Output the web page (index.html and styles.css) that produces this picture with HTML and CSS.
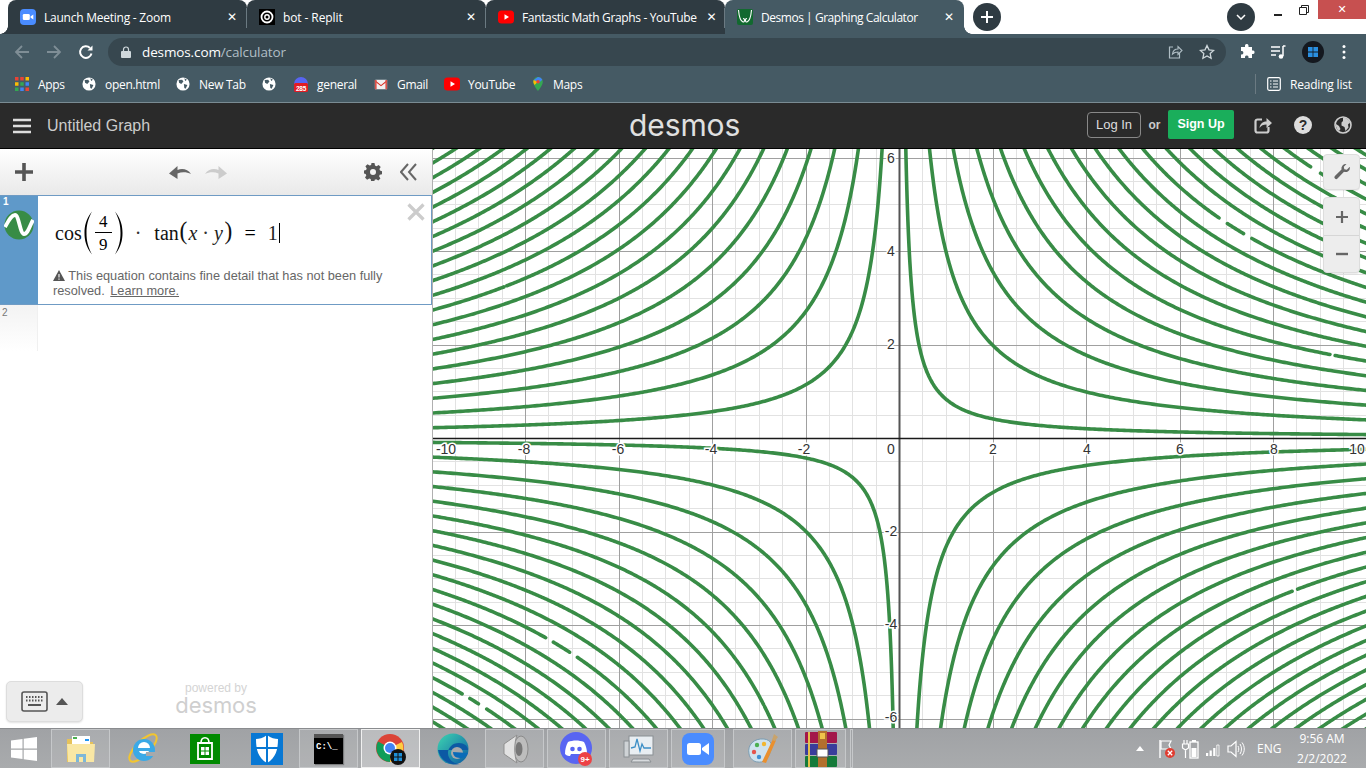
FILE: index.html
```html
<!DOCTYPE html>
<html lang="en">
<head>
<meta charset="utf-8">
<title>Desmos | Graphing Calculator</title>
<link rel="stylesheet" href="styles.css">
</head>
<body>
<svg class="defs" width="0" height="0" aria-hidden="true">
  <symbol id="globe" viewBox="0 0 16 16"><circle cx="8" cy="8" r="7.500" fill="#fff"/><path d="M3 3.500 7 3l1.500 2L6 8 3.500 6.500zM9 8l4 1-2 4.500-1.500-1zM9.500 1.500l3 1.500-2 1.500z" fill="#455a64"/></symbol>
  <symbol id="yt" viewBox="0 0 16 16"><rect y="1.500" width="16" height="13" rx="3.500" fill="#f00"/><path d="M6.500 5.200v5.600L11 8z" fill="#fff"/></symbol>
  <symbol id="cam" viewBox="0 0 16 16"><rect width="16" height="16" rx="4" fill="#4a8cff"/><rect x="2.800" y="5" width="7" height="6" rx="1.300" fill="#fff"/><path d="M10.500 7.500 13.300 5.400v5.200L10.500 8.500z" fill="#fff"/></symbol>
</svg>

<header class="chrome">
  <div class="tabstrip">
    <div class="tab tab-first">
      <svg class="fav" viewBox="0 0 16 16"><use href="#cam"/></svg>
      <span class="tab-title t-zoom">Launch Meeting - Zoom</span><span class="tab-x">✕</span>
    </div>
    <div class="tab">
      <svg class="fav" viewBox="0 0 16 16"><rect width="16" height="16" fill="#000"/><circle cx="8" cy="8" r="5.500" fill="none" stroke="#fff" stroke-width="1.800"/><circle cx="8" cy="8" r="2.200" fill="none" stroke="#fff" stroke-width="1.400"/></svg>
      <span class="tab-title">bot - Replit</span><span class="tab-x">✕</span>
    </div>
    <div class="tab">
      <svg class="fav" viewBox="0 0 16 16"><use href="#yt"/></svg>
      <span class="tab-title t-yt">Fantastic Math Graphs - YouTube</span><span class="tab-x">✕</span>
    </div>
    <div class="tab tab-active">
      <svg class="fav" viewBox="0 0 16 16"><rect width="16" height="16" rx="2" fill="#12692f"/><path d="M1.500 1c.5 6 2 11 4.500 12C8 13.500 8 9 6 9.500M14.500 1c-.5 6-2 11-4.500 12C8 13.500 8 9 10 9.500" fill="none" stroke="#fff" stroke-width="1.100"/></svg>
      <span class="tab-title t-des">Desmos | Graphing Calculator</span><span class="tab-x">✕</span>
    </div>
    <div class="newtab"><svg viewBox="0 0 14 14" width="14" height="14"><path d="M7 1v12M1 7h12" stroke="#fff" stroke-width="2"/></svg></div>
    <div class="tabsearch"><svg viewBox="0 0 10 6" width="10" height="6"><path d="M1 1l4 4 4-4" fill="none" stroke="#fff" stroke-width="1.500"/></svg></div>
    <div class="winctl">
      <span class="win-min"></span>
      <svg class="win-max" viewBox="0 0 10 10" width="10" height="10"><path d="M.5 2.500h7v7h-7zM2.500 2.500v-2h7v7h-2" fill="none" stroke="#222"/></svg>
      <span class="win-close">✕</span>
    </div>
  </div>

  <div class="toolbar">
    <svg class="nav" viewBox="0 0 16 16"><path d="M15 8H2M8 2 2 8l6 6" fill="none" stroke="#7f8e96" stroke-width="1.800"/></svg>
    <svg class="nav" viewBox="0 0 16 16"><path d="M1 8h13M8 2l6 6-6 6" fill="none" stroke="#7f8e96" stroke-width="1.800"/></svg>
    <svg class="nav" viewBox="0 0 16 16"><path d="M13.500 9.500A5.800 5.800 0 1 1 12 4" fill="none" stroke="#fff" stroke-width="2"/><path d="M14.500 1.500v5h-5z" fill="#fff"/></svg>
    <div class="omnibox">
      <svg class="lock" viewBox="0 0 10 12" width="10" height="12"><path d="M2.500 5V3.500a2.500 2.500 0 0 1 5 0V5" fill="none" stroke="#cfd8dc" stroke-width="1.200"/><rect y="5" width="10" height="7" rx="1" fill="#cfd8dc"/></svg>
      <span class="url">desmos.com<span class="url-path">/calculator</span></span>
      <svg class="omni-ic" viewBox="0 0 16 16"><path d="M6 3H2.500v11h10V9" fill="none" stroke="#b0bec5" stroke-width="1.200"/><path d="M5.500 10c.5-3.500 3-5 5.500-5V2.500L15 6.500l-4 4V8c-2 0-4 .5-5.500 2z" fill="none" stroke="#b0bec5" stroke-width="1.100"/></svg>
      <svg class="omni-ic omni-star" viewBox="0 0 16 16"><path d="M8 1.500l2 4.300 4.700.6-3.500 3.200.9 4.700L8 12l-4.100 2.300.9-4.700L1.300 6.400 6 5.800z" fill="none" stroke="#cfd8dc" stroke-width="1.300"/></svg>
    </div>
    <svg class="ext" viewBox="0 0 16 16"><path d="M6 1.500a1.800 1.800 0 0 1 3.500 0V3H13v3.500h1.200a1.800 1.800 0 0 1 0 3.500H13v4H9.500v-1.200a1.800 1.800 0 0 0-3.500 0V14H2v-3.500h1a1.800 1.800 0 0 0 0-3.500H2V3h4z" fill="#fff"/></svg>
    <svg class="ext" viewBox="0 0 16 16"><path d="M1 3h9M1 7h9M1 11h5" stroke="#fff" stroke-width="1.500"/><path d="M13 2v10" stroke="#fff" stroke-width="1.500"/><circle cx="11" cy="12.500" r="2.300" fill="#fff"/><path d="M13 2h2.500" stroke="#fff" stroke-width="1.500"/></svg>
    <span class="avatar"><svg viewBox="0 0 10 10" width="10" height="10"><path d="M0 0h4.600v4.600H0zM5.400 0H10v4.600H5.400zM0 5.400h4.600V10H0zM5.400 5.400H10V10H5.400z" fill="#2a8fe0"/></svg></span>
    <svg class="dots" viewBox="0 0 4 16" width="4" height="16"><circle cx="2" cy="2.500" r="1.500" fill="#fff"/><circle cx="2" cy="8" r="1.500" fill="#fff"/><circle cx="2" cy="13.500" r="1.500" fill="#fff"/></svg>
  </div>

  <nav class="bookmarks">
    <a class="bm bm-apps"><svg class="bm-ic" viewBox="0 0 12 12"><g><rect width="3" height="3" fill="#ea4335"/><rect x="4.500" width="3" height="3" fill="#ea4335"/><rect x="9" width="3" height="3" fill="#fbbc05"/><rect y="4.500" width="3" height="3" fill="#fbbc05"/><rect x="4.500" y="4.500" width="3" height="3" fill="#34a853"/><rect x="9" y="4.500" width="3" height="3" fill="#4285f4"/><rect y="9" width="3" height="3" fill="#34a853"/><rect x="4.500" y="9" width="3" height="3" fill="#4285f4"/><rect x="9" y="9" width="3" height="3" fill="#ea4335"/></g></svg>Apps</a>
    <a class="bm bm-open"><svg class="bm-ic" viewBox="0 0 16 16"><use href="#globe"/></svg>open.html</a>
    <a class="bm bm-new"><svg class="bm-ic" viewBox="0 0 16 16"><use href="#globe"/></svg>New Tab</a>
    <a class="bm bm-glob"><svg class="bm-ic" viewBox="0 0 16 16"><use href="#globe"/></svg></a>
    <a class="bm bm-gen"><svg class="bm-ic" viewBox="0 0 16 16"><path d="M1 8a7 7 0 0 1 14 0z" fill="#5865f2"/><rect x="1" y="7" width="14" height="9" rx="1.500" fill="#e21b23"/><text x="8" y="14.500" class="bm-badge">285</text></svg>general</a>
    <a class="bm bm-gmail"><svg class="bm-ic" viewBox="0 0 16 16"><rect x="1" y="3" width="14" height="11" rx="1" fill="#f1f1f1"/><path d="M1 3.500 8 9l7-5.500V5L8 10.500 1 5z" fill="#d93025"/><path d="M1 3.500h2v10.500H1zM13 3.500h2v10.500h-2z" fill="#d9534b"/></svg>Gmail</a>
    <a class="bm bm-yt"><svg class="bm-ic" viewBox="0 0 16 16"><use href="#yt"/></svg>YouTube</a>
    <a class="bm bm-maps"><svg class="bm-ic" viewBox="0 0 16 16"><path d="M8 0a5.500 5.500 0 0 0-5.500 5.500C2.500 9.500 8 16 8 16s5.500-6.500 5.500-10.500A5.500 5.500 0 0 0 8 0z" fill="#34a853"/><path d="M3 3.500 8 0a5.500 5.500 0 0 1 5 3L8 7.500z" fill="#4285f4"/><path d="M3 3.500C2.200 6 3 7.500 4 9l4-3.500z" fill="#fbbc05"/><circle cx="8" cy="5.500" r="2" fill="#ea4335"/></svg>Maps</a>
    <span class="bm-spacer"></span>
    <span class="bm-divider"></span>
    <a class="bm bm-read"><svg class="bm-ic" viewBox="0 0 14 14"><rect x=".7" y=".7" width="12.600" height="12.600" rx="1.500" fill="none" stroke="#fff" stroke-width="1.200"/><path d="M3 4h1.500M6 4h5M3 7h1.500M6 7h5M3 10h1.500M6 10h5" stroke="#fff" stroke-width="1.200"/></svg>Reading list</a>
  </nav>
</header>

<section class="app-head">
  <div class="head-left">
    <svg class="burger" viewBox="0 0 18 16" width="18" height="16"><path d="M0 2h18M0 8h18M0 14h18" stroke="#ddd" stroke-width="2.600"/></svg>
    <span class="graph-title">Untitled Graph</span>
  </div>
  <div class="logo">desmos</div>
  <div class="head-right">
    <span class="btn-login">Log In</span>
    <span class="or">or</span>
    <span class="btn-signup">Sign Up</span>
    <svg class="head-ic head-share" viewBox="0 0 18 18"><path d="M8 3.500H3.500a2 2 0 0 0-2 2v9a2 2 0 0 0 2 2h9a2 2 0 0 0 2-2V11" fill="none" stroke="#ccc" stroke-width="2.200"/><path d="M5.500 12c.5-4 3-6.500 7-6.500V2L18 7l-5.500 5V8.500c-3 0-5.500 1-7 3.500z" fill="#ccc"/></svg>
    <svg class="head-ic" viewBox="0 0 18 18"><circle cx="9" cy="9" r="9" fill="#ddd"/><text x="9" y="14" class="help-q">?</text></svg>
    <svg class="head-ic" viewBox="0 0 18 18"><circle cx="9" cy="9" r="8" fill="none" stroke="#ccc" stroke-width="1.600"/><path d="M9 1.500c3 0 6 2 7 5l-2 2 .5 3-3 3.500-1-4-3-1.500v-3L9 5zM2 8l3 2 1.500 3L5 15c-2-1.500-3.500-4-3-7z" fill="#ccc"/></svg>
  </div>
</section>

<main class="workspace">
  <aside class="sidebar">
    <div class="side-tools">
      <svg class="st-plus" viewBox="0 0 18 18" width="18" height="18"><path d="M9 0v18M0 9h18" stroke="#555" stroke-width="3.600"/></svg>
      <div class="st-hist">
        <svg viewBox="0 0 22 14" width="22" height="14"><path d="M0 8.500 8.500 1v4C13 3 19 4 22 9c-4-2-9-2.500-13.500-.5V14z" fill="#666"/></svg>
        <svg viewBox="0 0 22 14" width="22" height="14"><path d="M22 8.500 13.500 1v4C9 3 3 4 0 9c4-2 9-2.500 13.500-.5V14z" fill="#ccc"/></svg>
      </div>
      <svg class="st-gear" viewBox="0 0 18 18" width="18" height="18"><path d="M7.500 0h3l.5 2.500 1.500.7 2.200-1.300 2 2.100-1.300 2.100.6 1.500 2 .6v3l-2.300.5-.6 1.500 1.300 2.200-2.100 2.100-2.100-1.300-1.500.6-.5 2.200h-3L6.700 16l-1.500-.6-2.100 1.300L1 14.600l1.300-2.200-.6-1.400L0 10.500v-3l2.100-.5.6-1.500L1.400 3.300 3.500 1.200l2.100 1.300 1.500-.6zM9 6a3 3 0 1 0 0 6 3 3 0 0 0 0-6z" fill="#555" fill-rule="evenodd"/></svg>
      <svg class="st-hide" viewBox="0 0 17 18" width="17" height="18"><path d="M8 1 1 9l7 8M16 1 9 9l7 8" fill="none" stroke="#666" stroke-width="2"/></svg>
    </div>

    <div class="expr expr-active">
      <div class="expr-tab">
        <span class="expr-num">1</span>
        <svg class="expr-badge" viewBox="0 0 30 30" width="30" height="30"><circle cx="15" cy="15" r="14.500" fill="#388c46"/><path d="M1 17C4 12 7 5 11 5c4 0 5 19 9 19 4 0 6-9 9-14" fill="none" stroke="#fff" stroke-width="3.800"/></svg>
      </div>
      <div class="expr-body">
        <div class="math">
          <span class="m-fn">cos</span>
          <svg class="paren" viewBox="0 0 10 44" width="10" height="44"><path d="M9 .5C3 8 1.500 15 1.500 22S3 36 9 43.500C5 36 3.500 30 3.500 22S5 8 9 .5z" fill="#000"/></svg>
          <span class="frac"><span class="num">4</span><span class="den">9</span></span>
          <svg class="paren" viewBox="0 0 10 44" width="10" height="44"><path d="M1 .5C7 8 8.500 15 8.500 22S7 36 1 43.500C5 36 6.500 30 6.500 22S5 8 1 .5z" fill="#000"/></svg>
          <span class="m-op m-dot1">·</span>
          <span class="m-fn m-tan">tan</span>
          <span class="m-sp">(</span><i class="m-v">x</i><span class="m-op m-dot2">·</span><i class="m-v">y</i><span class="m-sp">)</span>
          <span class="m-eq">=</span>
          <span class="m-one">1</span><span class="cursor"></span>
        </div>
        <p class="warn"><svg class="warn-ic" viewBox="0 0 12 11" width="12" height="11"><path d="M6 0l6 11H0z" fill="#555"/><path d="M6 4v3.500M6 8.500v1.200" stroke="#fff" stroke-width="1.100"/></svg> This equation contains fine detail that has not been fully<br>resolved. <a class="learn">Learn more.</a></p>
        <svg class="expr-x" viewBox="0 0 18 18" width="18" height="18"><path d="M1.500 1.500l15 15M16.500 1.500l-15 15" stroke="#ccc" stroke-width="3.200"/></svg>
      </div>
    </div>

    <div class="expr expr-empty">
      <div class="expr-tab-empty"><span class="expr-num2">2</span></div>
    </div>

    <div class="side-foot">
      <div class="kbd-btn">
        <svg viewBox="0 0 27 21" width="27" height="21"><rect x="1" y="1" width="25" height="19" rx="2" fill="none" stroke="#555" stroke-width="1.600"/><path d="M5 6h1.500M8 6h1.500M11 6h1.500M14 6h1.500M17 6h1.500M20 6h1.500M5 9.500h1.500M8 9.500h1.500M11 9.500h1.500M14 9.500h1.500M17 9.500h1.500M20 9.500h1.500" stroke="#555" stroke-width="1.800"/><path d="M7 14h13" stroke="#555" stroke-width="2"/></svg>
        <span class="kbd-arrow"></span>
      </div>
      <div class="powered"><span class="pw-by">powered by</span><span class="pw-logo">desmos</span></div>
    </div>
  </aside>

  <div class="graph">
    <svg id="plot" class="plot" width="933" height="579" viewBox="0 0 933 579">
      <g id="grid"></g>
      <g id="curves" class="curves"></g>
      <g class="ticks">
        <text x="13" y="305">-10</text><text x="91" y="305">-8</text><text x="185" y="305">-6</text><text x="278" y="305">-4</text><text x="371" y="305">-2</text><text x="458" y="305">0</text><text x="560" y="305">2</text><text x="654" y="305">4</text><text x="747" y="305">6</text><text x="841" y="305">8</text><text x="924" y="305">10</text>
        <text x="458" y="14">6</text><text x="458" y="107">4</text><text x="458" y="200">2</text><text x="458" y="387">-2</text><text x="458" y="480">-4</text><text x="458" y="573">-6</text>
      </g>
    </svg>
    <div class="g-tools">
      <div class="g-btn g-wrench"><svg viewBox="0 0 18 18" width="18" height="18"><path d="M17 4.500a4.500 4.500 0 0 1-6 4.300L4.500 15.500a1.800 1.800 0 0 1-2.600-2.500L8.500 6.500A4.500 4.500 0 0 1 13.500 1l-2.700 2.700.5 2.500 2.500.5L16.500 4z" fill="#666"/></svg></div>
      <div class="g-zoom">
        <div class="g-zbtn"><svg viewBox="0 0 12 12" width="12" height="12"><path d="M6 0v12M0 6h12" stroke="#666" stroke-width="2.200"/></svg></div>
        <div class="g-zbtn g-zbtn-low"><svg viewBox="0 0 12 4" width="12" height="4"><path d="M0 2h12" stroke="#666" stroke-width="2.400"/></svg></div>
      </div>
    </div>
  </div>
</main>

<footer class="taskbar">
  <div class="start"><svg viewBox="0 0 26 26" width="26" height="26"><path d="M0 4.500 11.500 3v9.500H0zM12.700 2.800 26 1v11.500H12.700zM0 13.700h11.500V23L0 21.500zM12.700 13.700H26V25l-13.300-1.800z" fill="#fff"/></svg></div>
  <div class="task on"><svg viewBox="0 0 32 32" width="32" height="32"><path d="M2 6h11l2 3h13v20H2z" fill="#e6c25a"/><rect x="7" y="3" width="18" height="10" fill="#fff"/><rect x="8" y="4" width="4" height="2" fill="#4caf50"/><rect x="20" y="6" width="4" height="2" fill="#2196f3"/><path d="M2 11h28l-1 18H3z" fill="#f9e7a4"/><path d="M11 29v-8h10v8h-3v-5h-4v5z" fill="#7db7d8"/></svg></div>
  <div class="task"><svg viewBox="0 0 32 32" width="32" height="32"><ellipse cx="16" cy="15" rx="18" ry="7" transform="rotate(-45 16 15)" fill="none" stroke="#f2c530" stroke-width="2"/><circle cx="17" cy="17" r="11" fill="#3aa9e6"/><circle cx="17" cy="15" r="6" fill="#fff"/><rect x="11" y="15" width="14" height="3" fill="#3aa9e6"/><rect x="19" y="19" width="12" height="4" fill="#a7a9ab"/></svg></div>
  <div class="task"><svg viewBox="0 0 30 30" width="30" height="30"><rect width="30" height="30" fill="#008a00"/><path d="M8 9h14v16H8z" fill="none" stroke="#fff" stroke-width="1.800"/><path d="M11 9c0-7 8-7 8 0" fill="none" stroke="#fff" stroke-width="1.600"/><path d="M11 13h3.500v3.500H11zM15.500 13H19v3.500h-3.500zM11 17.500h3.500V21H11zM15.500 17.500H19V21h-3.500z" fill="#fff"/></svg></div>
  <div class="task"><svg viewBox="0 0 32 32" width="32" height="32"><rect width="32" height="32" fill="#0878d4"/><path d="M16 2c4 3 8 4 11 4 0 10-2 19-11 24C7 25 5 16 5 6c3 0 7-1 11-4z" fill="#fff"/><path d="M16 2v28M5 15h22" stroke="#0878d4" stroke-width="2"/></svg></div>
  <div class="task on"><div class="cmd"><span class="cmd-bar"></span><span class="cmd-text">C:\_</span></div></div>
  <div class="task on active"><svg viewBox="0 0 32 32" width="32" height="32"><circle cx="15" cy="15" r="14" fill="#db4437"/><path d="M15 15 3 8.500A14 14 0 0 0 15 29z" fill="#0f9d58"/><path d="M15 15v14a14 14 0 0 0 12-20z" fill="#ffcd40"/><circle cx="15" cy="15" r="6.500" fill="#fff"/><circle cx="15" cy="15" r="5" fill="#4285f4"/><circle cx="23" cy="24" r="8" fill="#111"/><rect x="19" y="20" width="8" height="8" fill="#1e8fd8"/><path d="M23 20v8M19 24h8" stroke="#111"/></svg></div>
  <div class="task"><svg viewBox="0 0 32 32" width="32" height="32"><defs><linearGradient id="edgeg" x1="0" y1="0" x2="1" y2="1"><stop offset="0" stop-color="#3ed6b0"/><stop offset="1" stop-color="#0c59a4"/></linearGradient></defs><circle cx="16" cy="16" r="15.500" fill="url(#edgeg)"/><path d="M31 17c0-4-4-7-9-7-7 0-11 5-11 10 0 6 5 11 12 11-9 2-20-3-22-14" fill="#0c59a4"/><circle cx="20" cy="20" r="6" fill="#a7a9ab"/><path d="M31 20c-1 3-4 5-8 5-5 0-7-3-7-6" fill="#0a6bb8"/></svg></div>
  <div class="task on"><svg viewBox="0 0 32 32" width="32" height="32"><ellipse cx="22" cy="16" rx="7" ry="13" fill="#bdbdbd" stroke="#8a8a8a"/><path d="M5 11l13-9c-3 8-3 20 0 28L5 21z" fill="#e2e2e2" stroke="#8f8f8f"/><ellipse cx="20" cy="16" rx="3.500" ry="7" fill="#777"/></svg></div>
  <div class="task on"><svg viewBox="0 0 34 34" width="34" height="34"><circle cx="16" cy="16" r="16" fill="#5865f2"/><path d="M8 10c5-2 11-2 16 0 2 4 3 7 3 12-2 2-4 2-5 2l-1-2H11l-1 2c-1 0-3 0-5-2 0-5 1-8 3-12z" fill="#fff"/><circle cx="12.500" cy="17" r="2.300" fill="#5865f2"/><circle cx="19.500" cy="17" r="2.300" fill="#5865f2"/><circle cx="25" cy="27" r="7" fill="#ed4245"/><text x="25" y="30" class="disc-badge">9+</text></svg></div>
  <div class="task on"><svg viewBox="0 0 32 32" width="32" height="32"><rect x="6" y="3" width="24" height="19" fill="#e9eef2" stroke="#8a8f93"/><path d="M8 15l4-1 2-8 3 12 2-7 2 4h7" fill="none" stroke="#3d8fc6" stroke-width="1.300"/><rect x="1" y="8" width="5" height="16" fill="#cfd3d6" stroke="#8a8f93"/><path d="M10 26h16l2 3H8z" fill="#d8dbde" stroke="#8a8f93"/></svg></div>
  <div class="task on task-zoom"><svg viewBox="0 0 32 32" width="32" height="32"><rect width="32" height="32" rx="8" fill="#4a8cff"/><rect x="5" y="10" width="14" height="12" rx="2.500" fill="#fff"/><path d="M20 15l7-5v12l-7-5z" fill="#fff"/></svg></div>
  <div class="task on"><svg viewBox="0 0 34 34" width="34" height="34"><path d="M3 22C1 13 8 6 18 7c8 1 9 7 6 14-2 6-7 10-12 9-4 0-8-3-9-8z" fill="#cfe2ee" stroke="#7b9db3"/><circle cx="8" cy="20" r="2.200" fill="#e5534b"/><circle cx="11" cy="13" r="2.200" fill="#4caf50"/><circle cx="18" cy="12" r="2.200" fill="#f2b632"/><circle cx="13" cy="25" r="2.200" fill="#3f8fd2"/><path d="M16 30 27 7l3 1.500L20 31z" fill="#e9902f"/><path d="M26 8l2-6 4 3-3 4z" fill="#c9a36b"/></svg></div>
  <div class="task on task-rar"><svg viewBox="0 0 32 36" width="32" height="36"><rect y="1" width="32" height="11" rx="1" fill="#a3174a"/><rect y="13" width="32" height="11" rx="1" fill="#3a3d9c"/><rect y="25" width="32" height="11" rx="1" fill="#157a3a"/><rect x="3" y="1" width="2" height="35" fill="#e5c04a"/><rect x="13" y="0" width="9" height="36" fill="#b3702e"/><rect x="15" y="2" width="5" height="6" fill="#f0c24a"/><rect x="12" y="18" width="11" height="8" fill="#fff" stroke="#555"/></svg></div>
  <div class="task-sliver"></div>
  <div class="tray">
    <span class="tray-arrow"></span>
    <svg class="tray-ic" viewBox="0 0 18 20" width="18" height="20"><path d="M3 1v18" stroke="#fff" stroke-width="1.400"/><path d="M4 2h10l-2 4 2 4H4z" fill="none" stroke="#fff" stroke-width="1.200"/><circle cx="13" cy="14" r="5" fill="#e03c31"/><path d="M10.800 11.800l4.400 4.400M15.200 11.800l-4.400 4.400" stroke="#fff" stroke-width="1.300"/></svg>
    <svg class="tray-ic" viewBox="0 0 18 20" width="18" height="20"><rect x="9" y="3" width="8" height="16" fill="none" stroke="#fff" stroke-width="1.300"/><rect x="11" y="1" width="4" height="2" fill="#fff"/><rect x="10.500" y="9" width="5" height="9" fill="#fff"/><path d="M3 1v4M6 1v4M1.500 5h6v4l-3 2-3-2zM4.500 11v8" stroke="#fff" fill="none" stroke-width="1.200"/></svg>
    <svg class="tray-ic" viewBox="0 0 16 16" width="16" height="16"><path d="M1 12h2.200v3H1zM4.600 9.500h2.200V15H4.600zM8.200 7h2.200v8H8.200z" fill="#fff"/><path d="M11.800 4h2.200v11h-2.200z" fill="none" stroke="#fff" stroke-width=".8"/></svg>
    <svg class="tray-ic" viewBox="0 0 18 18" width="18" height="18"><path d="M1 6h3l5-4.500v15L4 12H1z" fill="none" stroke="#fff" stroke-width="1.200"/><path d="M11 6c1 2 1 4 0 6M13 4c2 3 2 7 0 10M15 2.500c3 4 3 9 0 13" fill="none" stroke="#fff"/></svg>
    <span class="tray-lang">ENG</span>
    <span class="tray-clock">9:56 AM<br>2/2/2022</span>
  </div>
</footer>
<script src="graph.js"></script>
</body>
</html>
```

FILE: styles.css
```css
* { box-sizing: border-box; }
html, body { margin: 0; padding: 0; height: 768px; width: 1366px; overflow: hidden; background: #fff; }
body { display: flex; flex-direction: column; font-family: "Liberation Sans", Arial, sans-serif; }
.defs { position: absolute; }

/* Browser chrome */
.chrome { flex: none; height: 103px; background: #455a64; color: #fff; font-family: "Open Sans", sans-serif; border-bottom: 1px solid #7a8b93; }
.tabstrip { height: 34px; background: #fff; display: flex; align-items: stretch; padding-left: 8px; }
.tab { width: 239px; height: 34px; background: #2f3b42; display: flex; align-items: center; padding-left: 12px; position: relative; border-radius: 8px 8px 0 0; font-size: 12px; }
.tab::after { content: ""; position: absolute; right: 0; top: 8px; height: 20px; width: 1px; background: #6b7a82; }
.tab-first::before, .tab-active::before { content: ""; position: absolute; bottom: 0; width: 8px; height: 8px; }
.tab-first::before { left: -8px; background: radial-gradient(circle at 0 0, transparent 7.500px, #2f3b42 8px); }
.tab-active { background: #455a64; }
.tab-active::after { display: none; }
.tab-active::before { right: -8px; background: radial-gradient(circle at 100% 0, transparent 7.500px, #455a64 8px); }
.fav { width: 16px; height: 16px; flex: none; margin-right: 8px; }
.tab-title { flex: 1; white-space: nowrap; color: #fff; letter-spacing: -.1px; }
.t-zoom { letter-spacing: -.24px; }
.t-yt { letter-spacing: -.35px; }
.t-des { letter-spacing: -.46px; }
.tab-x { width: 30px; text-align: center; font-size: 12px; font-weight: 700; flex: none; font-family: "DejaVu Sans", sans-serif; }
.newtab, .tabsearch { width: 28px; height: 28px; border-radius: 50%; background: #2f3b42; display: flex; align-items: center; justify-content: center; flex: none; margin-top: 3px; }
.newtab { margin-left: 9px; }
.tabsearch { margin-left: 226px; }
.winctl { display: flex; align-items: flex-start; margin-left: auto; }
.win-min { width: 8px; height: 2px; background: #222; margin: 14px 17px 0 0; }
.win-max { margin: 5px 0 0 0; }
.win-close { width: 48px; height: 19px; background: #c75050; margin-left: 9px; text-align: center; font-size: 11px; line-height: 19px; color: #fff; font-family: "DejaVu Sans", sans-serif; }

.toolbar { height: 34px; display: flex; align-items: center; padding: 2px 0 0 14px; }
.nav { width: 16px; height: 16px; flex: none; margin-right: 16px; }
.omnibox { width: 1118px; height: 28px; margin-left: -2px; border-radius: 14px; background: #37474f; display: flex; align-items: center; padding-left: 13px; font-size: 13.500px; }
.lock { flex: none; margin-right: 11px; }
.url { flex: 1; color: #fff; letter-spacing: -.12px; }
.url-path { color: #b0bec5; }
.omni-ic { width: 16px; height: 16px; flex: none; margin-right: 16px; }
.omni-star { margin-right: 11px; }
.ext { width: 16px; height: 16px; flex: none; margin-left: 13px; margin-right: 2px; }
.avatar { width: 22px; height: 22px; border-radius: 50%; background: #14181f; margin-left: 14px; flex: none; display: flex; align-items: center; justify-content: center; }
.dots { margin-left: 18px; }

.bookmarks { height: 34px; display: flex; align-items: center; padding: 0 0 2px 15px; font-size: 12px; letter-spacing: -.3px; }
.bm { display: flex; align-items: center; color: #fff; white-space: nowrap; flex: none; }
.bm-ic { width: 14px; height: 14px; flex: none; margin-right: 9px; }
.bm-apps { width: 67px; }
.bm-apps .bm-ic { width: 14px; height: 14px; margin-right: 9px; }
.bm-open { width: 94px; }
.bm-new { width: 86px; }
.bm-glob { width: 31px; }
.bm-gen { width: 81px; }
.bm-gen .bm-ic { width: 16px; height: 16px; margin-right: 8px; }
.bm-gmail { width: 70px; }
.bm-yt { width: 87px; }
.bm-yt .bm-ic { width: 16px; height: 16px; margin-right: 8px; }
.bm-maps .bm-ic { width: 14px; height: 16px; margin-right: 8px; }
.bm-badge { font: 700 6.500px "Liberation Sans", sans-serif; fill: #fff; text-anchor: middle; }
.bm-spacer { flex: 1; }
.bm-divider { width: 1px; height: 20px; background: #6b7a82; margin-right: 11px; }
.bm-read { width: 99px; letter-spacing: -.2px; }

/* Desmos header */
.app-head { flex: none; height: 46px; background: #2a2a2a; display: flex; align-items: center; position: relative; border-bottom: 1px solid #000; color: #ddd; }
.head-left { display: flex; align-items: center; padding-left: 13px; }
.graph-title { font-size: 16px; margin-left: 16px; color: #ccc; }
.logo { position: absolute; left: 629px; top: 0; font: 400 30px/44px Inter, sans-serif; color: #e0e0e0; letter-spacing: -.1px; }
.head-right { margin-left: auto; display: flex; align-items: center; padding: 0 14px 2px 0; }
.btn-login { width: 54px; height: 26px; border: 1px solid #888; border-radius: 4px; font-size: 13px; line-height: 24px; text-align: center; color: #ddd; }
.or { font-size: 12px; width: 27px; text-align: center; color: #ccc; font-weight: 700; }
.btn-signup { width: 66px; height: 29px; border-radius: 2px; background: #1aae5b; color: #fff; font-size: 12.500px; font-weight: 700; line-height: 29px; text-align: center; margin-right: 20px; }
.head-ic { width: 18px; height: 18px; margin-right: 22px; flex: none; }
.head-ic:last-child { margin-right: 0; }
.help-q { font: 700 14px "Liberation Sans", sans-serif; fill: #2a2a2a; text-anchor: middle; }

/* Workspace */
.workspace { flex: 1; min-height: 0; display: flex; }
.sidebar { width: 433px; flex: none; display: flex; flex-direction: column; border-right: 1px solid #b0b0b0; background: #fff; }
.side-tools { height: 46px; flex: none; background: linear-gradient(#fff, #e9e9e9); display: flex; align-items: center; padding: 0 15px; }
.st-hist { display: flex; gap: 14px; margin-left: 136px; }
.st-gear { margin-left: 137px; }
.st-hide { margin-left: 18px; }

.expr { display: flex; flex: none; }
.expr-active { height: 110px; border: 1px solid #6f9bc4; border-left: 0; }
.expr-tab { width: 38px; flex: none; background: #5f99c9; position: relative; }
.expr-num { position: absolute; left: 3px; top: 0; font-size: 10px; color: #fff; font-weight: 700; }
.expr-badge { position: absolute; left: 4px; top: 14px; }
.expr-body { flex: 1; position: relative; padding: 15px 0 0 15px; }
.expr-x { position: absolute; right: 6px; top: 7px; }
.math { height: 44px; display: flex; align-items: center; padding-left: 2px; font-family: "Liberation Serif", serif; font-size: 20px; color: #000; white-space: nowrap; }
.m-fn { color: #111; }
.paren { flex: none; margin: 0 1px; }
.frac { display: flex; flex-direction: column; align-items: center; font-size: 17px; line-height: 20px; width: 17px; margin: 0 1px; }
.num { border-bottom: 1px solid #000; width: 100%; text-align: center; line-height: 21px; }
.den { line-height: 23px; }
.m-op { color: #333; }
.m-dot1 { margin-left: 10px; }
.m-tan { margin-left: 13px; }
.m-sp { font-size: 26px; font-weight: 400; line-height: 24px; color: #111; transform: scaleX(.9) translateY(-2px); }
.m-v { color: #222; margin: 0 1px; }
.m-dot2 { margin: 0 4px; }
.m-eq { margin-left: 12px; }
.m-one { margin-left: 12px; color: #222; }
.cursor { width: 1px; height: 20px; background: #000; margin-left: 1px; }
.warn { margin: 13px 0 0 0; font-size: 12.750px; line-height: 15px; color: #666; }
.warn-ic { vertical-align: -1px; }
.learn { text-decoration: underline; margin-left: 2px; }

.expr-empty { height: 46px; }
.expr-tab-empty { width: 38px; background: linear-gradient(#f3f3f3, #fff); border-right: 1px solid #f0f0f0; position: relative; }
.expr-num2 { position: absolute; left: 2px; top: 2px; font-size: 10px; color: #777; }

.side-foot { margin-top: auto; height: 47px; display: flex; padding: 0 0 5px 6px; align-items: flex-start; }
.kbd-btn { width: 77px; height: 41px; background: #ececec; border: 1px solid #ddd; border-radius: 5px; box-shadow: 0 1px 2px rgba(0,0,0,.12); display: flex; align-items: center; padding-left: 14px; gap: 8px; }
.kbd-arrow { width: 0; height: 0; border-left: 6px solid transparent; border-right: 6px solid transparent; border-bottom: 7px solid #555; }
.powered { margin-left: 93px; width: 80px; display: flex; flex-direction: column; align-items: center; color: #d4d4d4; }
.pw-by { font-size: 12px; line-height: 14px; }
.pw-logo { font: 400 22px/20px Inter, sans-serif; letter-spacing: -.1px; color: #cfcfcf; }

/* Graph */
.graph { flex: 1; min-width: 0; position: relative; overflow: hidden; background: #fff; }
.plot { display: block; }
.curves path { fill: none; stroke: #388c46; stroke-width: 3.6px; stroke-linejoin: round; stroke-linecap: round; }
.ticks text { font: 14px "Liberation Sans", sans-serif; fill: #333; text-anchor: middle; stroke: #fff; stroke-width: 3px; paint-order: stroke; }
.g-tools { position: absolute; right: 6px; top: 5px; width: 37px; display: flex; flex-direction: column; gap: 7px; }
.g-btn, .g-zoom { background: #ededed; border: 1px solid #ddd; border-radius: 4px; box-shadow: 0 1px 1px rgba(0,0,0,.08); }
.g-btn { height: 36px; display: flex; align-items: center; justify-content: center; }
.g-zbtn { height: 37px; display: flex; align-items: center; justify-content: center; }
.g-zbtn-low { border-top: 1px solid #d6d6d6; }

/* Taskbar */
.taskbar { flex: none; height: 40px; background: linear-gradient(#a0a2a5, #a9abad); border-top: 1px solid #8a8c8f; display: flex; gap: 3px; color: #fff; }
.start { width: 48px; flex: none; display: flex; align-items: center; justify-content: center; }
.task { width: 59px; height: 39px; flex: none; display: flex; align-items: center; justify-content: center; border: 1px solid transparent; }
.task.on { border-color: #c6c8ca; background: rgba(255,255,255,.1); }
.task.active { border-color: #f0f0f0; background: rgba(255,255,255,.28); }
.task-zoom { width: 54px; margin-right: 5px; }
.task-rar { width: 51px; }
.task-sliver { width: 3px; height: 39px; border: 1px solid #c6c8ca; margin-left: 1px; flex: none; }
.cmd { width: 29px; height: 30px; background: #000; box-shadow: 1px 1px 1px rgba(0,0,0,.3); display: flex; flex-direction: column; }
.cmd-bar { height: 4px; background: #555; }
.cmd-text { font: 700 9px/18px "Liberation Mono", monospace; color: #fff; padding-left: 2px; }
.disc-badge { font: 700 8px "Liberation Sans", sans-serif; fill: #fff; text-anchor: middle; }
.tray { margin-left: auto; display: flex; align-items: center; padding-right: 11px; }
.tray-arrow { width: 0; height: 0; border-left: 4px solid transparent; border-right: 4px solid transparent; border-bottom: 5px solid #fff; margin-right: 13px; }
.tray-ic { margin-right: 6px; flex: none; }
.tray-lang { font-size: 12px; font-family: "Open Sans", sans-serif; margin-left: 6px; width: 32px; }
.tray-clock { font-family: "Open Sans", sans-serif; font-size: 12px; line-height: 20px; text-align: center; width: 66px; }
```

FILE: graph.js
```js
(function () {
  var NS = 'http://www.w3.org/2000/svg';
  var W = 933, H = 579, OX = 466.5, OY = 289.5, S = 46.75;
  var grid = document.getElementById('grid');
  var curves = document.getElementById('curves');

  function line(x1, y1, x2, y2, color, width) {
    var l = document.createElementNS(NS, 'line');
    l.setAttribute('x1', x1); l.setAttribute('y1', y1);
    l.setAttribute('x2', x2); l.setAttribute('y2', y2);
    l.setAttribute('stroke', color); l.setAttribute('stroke-width', width);
    grid.appendChild(l);
  }

  // grid: minor every 0.5 unit, major every 2 units
  [false, true].forEach(function (major) {
    for (var i = -24; i <= 24; i++) {
      var isMajor = i % 4 === 0;
      if (isMajor !== major || i === 0) continue;
      var color = major ? '#a0a0a0' : '#e2e2e2';
      var vx = Math.floor(OX + i * S / 2) + 0.5;
      var hy = Math.floor(OY + i * S / 2) + 0.5;
      line(vx, 0, vx, H, color, 1);
      line(0, hy, W, hy, color, 1);
    }
  });
  line(OX, 0, OX, H, '#555', 2);
  line(0, OY, W, OY, '#1a1a1a', 1.6);

  // white breaks in the plotted curves, in page coordinates
  var gaps = [
    [1223, 221, 4.5], [1248, 236, 4.5], [1316, 170, 5], [550, 639, 4.5], [574, 654, 4.5],
    [467, 695, 4.5], [483, 705, 4.5], [655, 190, 2], [505, 285, 2], [1333, 354, 2],
    [1295, 590, 2], [1145, 680, 2], [765, 705, 1.5]
  ].map(function (g) { return [g[0] - 433, g[1] - 149, g[2]]; });

  function inGap(px, py) {
    return gaps.some(function (g) {
      var dx = px - g[0], dy = py - g[1];
      return dx * dx + dy * dy < g[2] * g[2];
    });
  }

  // cos(4/9) * tan(xy) = 1  ->  xy = atan(1/cos(4/9)) + k*pi
  var base = Math.atan(1 / Math.cos(4 / 9));

  function trace(c, sx) {
    // branch of x*y = c, with x of sign sx; keep a point about every 2 pixels
    var d = '', drawing = false, lastX = 0, lastY = 0;
    for (var t = -7; t <= 7; t += 0.002) {
      var x = sx * Math.exp(t), y = c / x;
      var px = OX + x * S, py = OY - y * S;
      if (px < -6 || px > W + 6 || py < -6 || py > H + 6 || inGap(px, py)) { drawing = false; continue; }
      var far = Math.abs(px - lastX) + Math.abs(py - lastY) >= 2;
      if (!drawing || far) {
        d += (drawing ? 'L' : 'M') + px.toFixed(2) + ' ' + py.toFixed(2);
        drawing = true; lastX = px; lastY = py;
      }
    }
    if (!d) return;
    var p = document.createElementNS(NS, 'path');
    p.setAttribute('d', d);
    curves.appendChild(p);
  }

  for (var k = -24; k <= 24; k++) {
    var c = base + k * Math.PI;
    trace(c, 1);
    trace(c, -1);
  }
})();
```
